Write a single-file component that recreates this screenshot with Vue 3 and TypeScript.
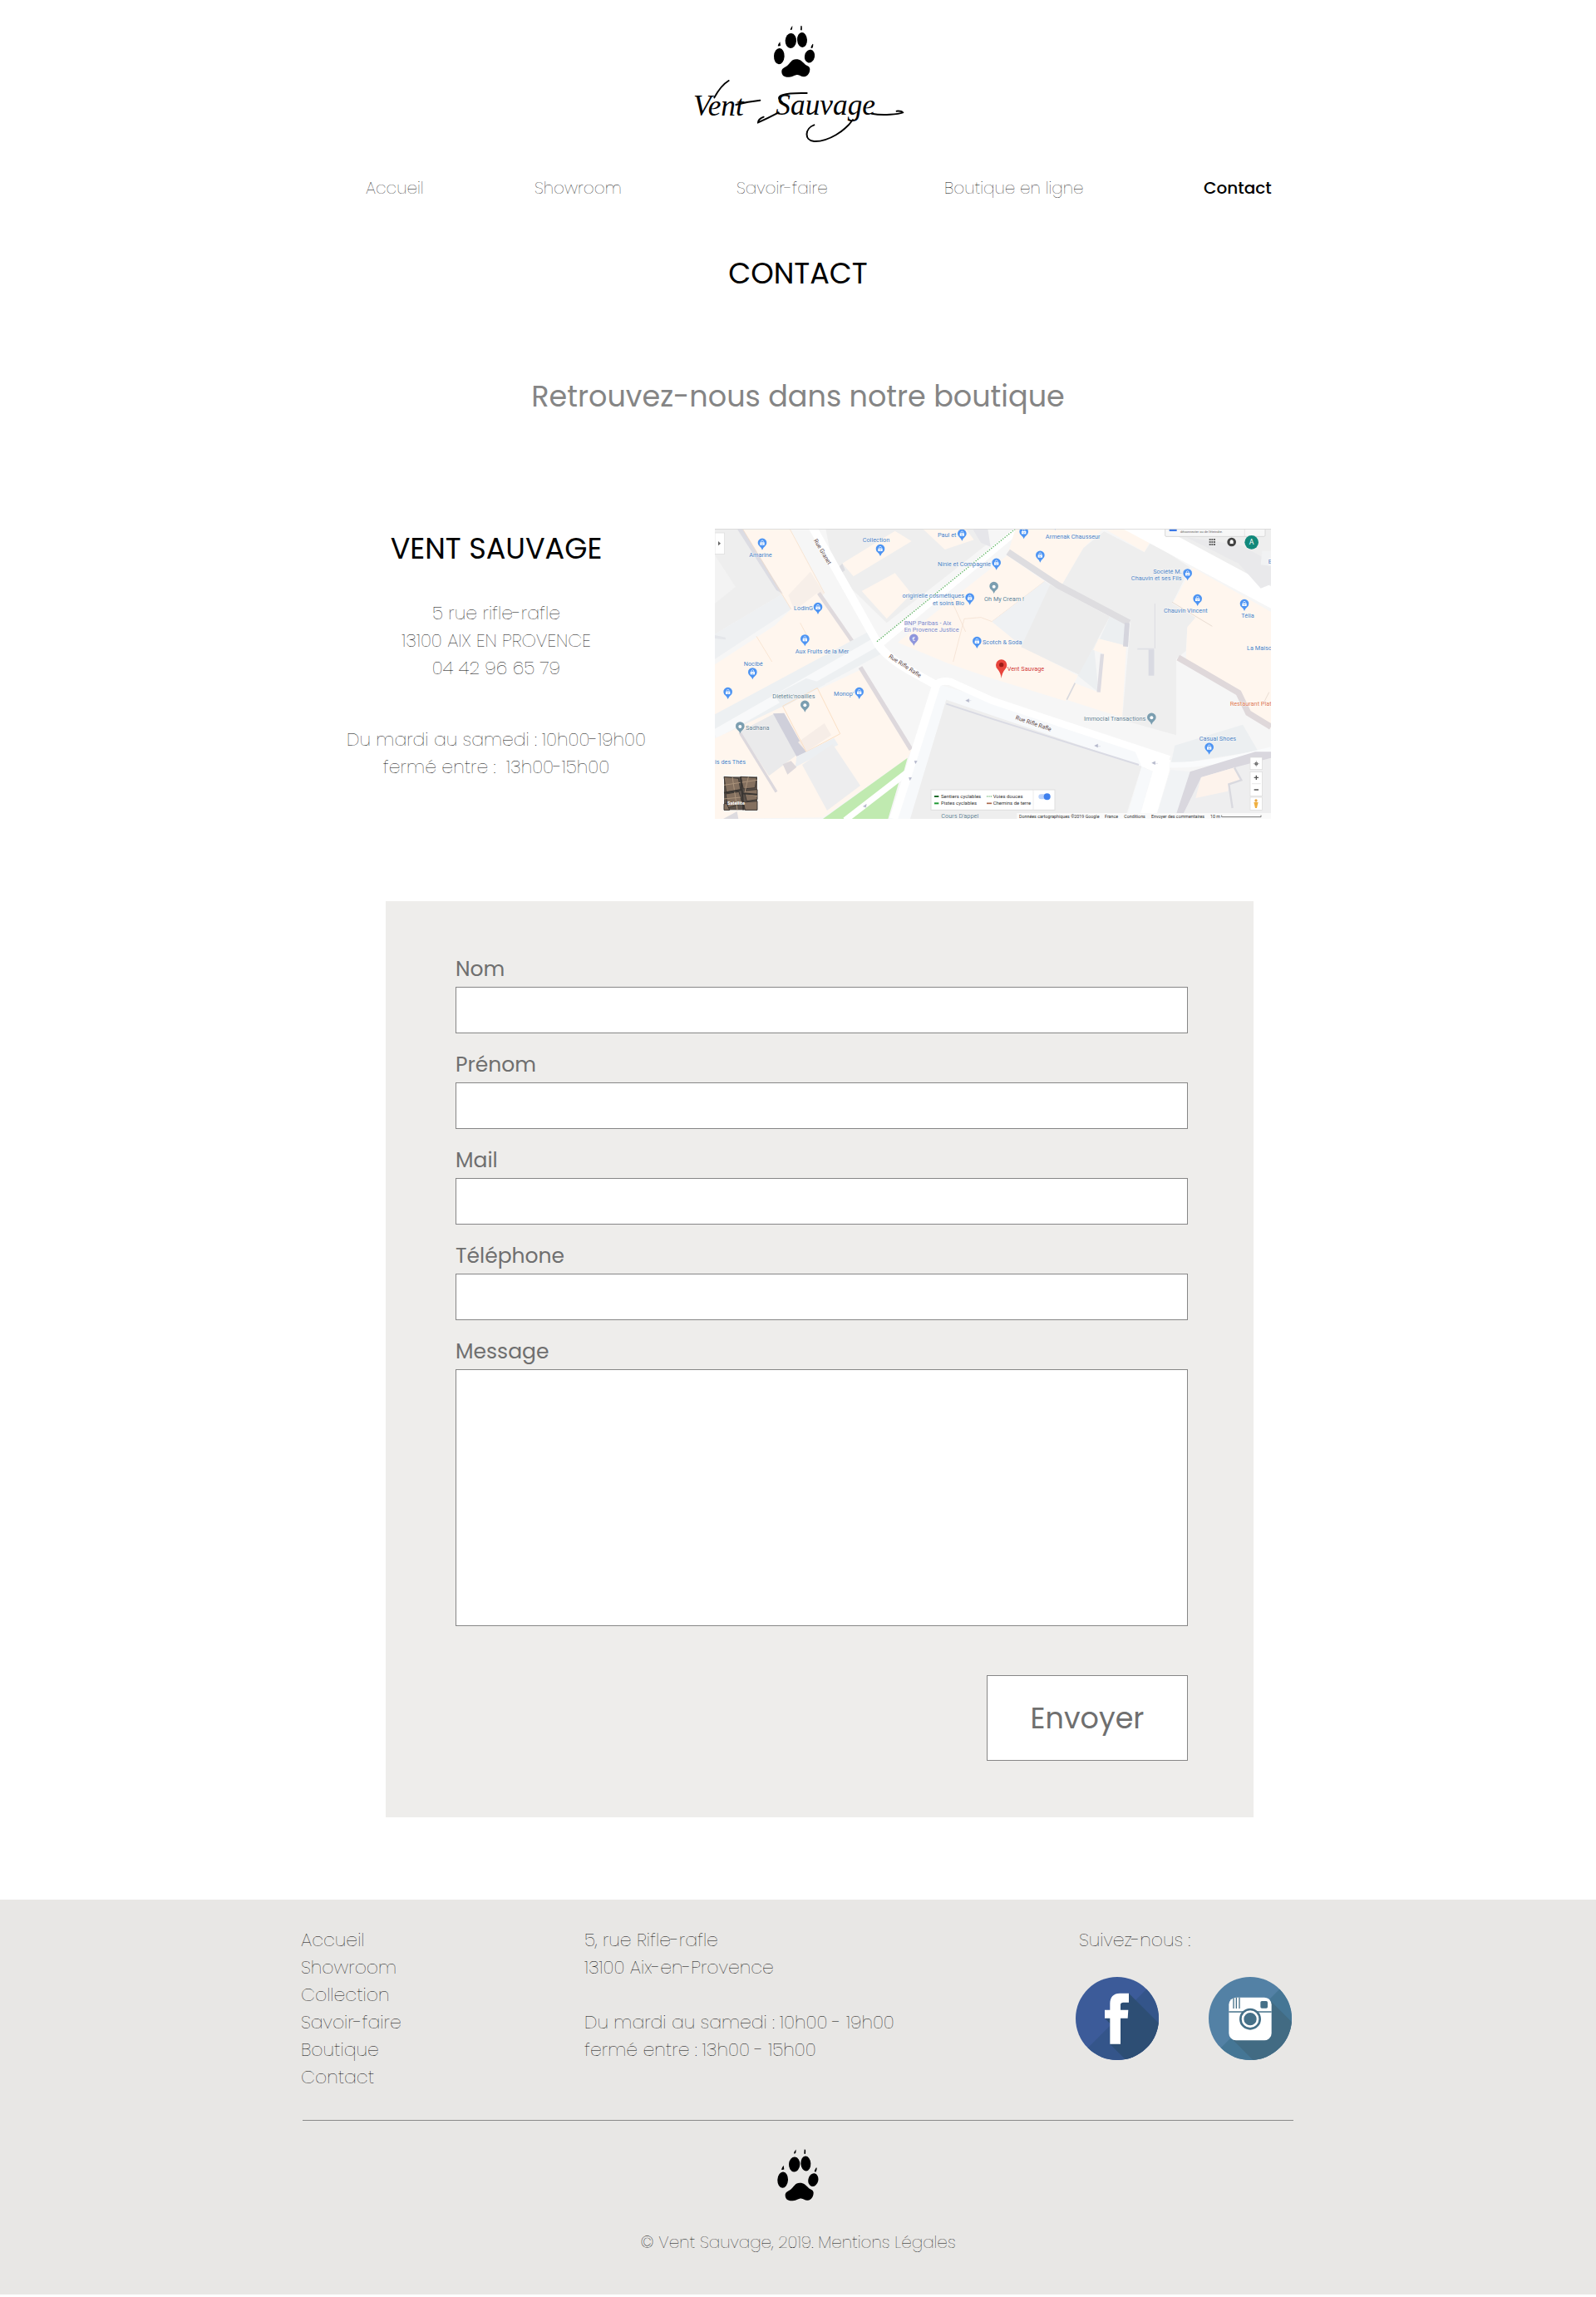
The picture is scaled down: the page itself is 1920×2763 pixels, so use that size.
<script setup lang="ts">
import { ref } from 'vue'

interface NavLink { label: string; current?: boolean }
interface Field { id: string; label: string; type: string }
interface Pin { x: number; y: number; color: string }
interface MapLabel { x: number; y: number; text: string; kind: string; end?: boolean }

const navLinks: NavLink[] = [
  { label: 'Accueil' },
  { label: 'Showroom' },
  { label: 'Savoir-faire' },
  { label: 'Boutique en ligne' },
  { label: 'Contact', current: true },
]

const footerLinks: string[] = ['Accueil', 'Showroom', 'Collection', 'Savoir-faire', 'Boutique', 'Contact']

const fields: Field[] = [
  { id: 'nom', label: 'Nom', type: 'text' },
  { id: 'prenom', label: 'Prénom', type: 'text' },
  { id: 'mail', label: 'Mail', type: 'email' },
  { id: 'telephone', label: 'Téléphone', type: 'tel' },
]

const form = ref<Record<string, string>>({ nom: '', prenom: '', mail: '', telephone: '', message: '' })

const SHOP = '#4d94f3'
const PLACE = '#7b9eb0'

const shopPins: Pin[] = [
  [171, 52], [597, 74], [892, 19], [1016, 124], [920, 250], [372, 284], [325, 399], [136, 519],
  [946, 407], [1115, 12], [1174, 97], [1228, -20], [1706, 162], [1742, 254], [1911, 272],
  [47, 590], [521, 590], [1784, 790],
].map(([x, y]) => ({ x, y, color: SHOP }))

const placePins: Pin[] = [
  { x: 1007, y: 209, color: PLACE },
  { x: 325, y: 637, color: PLACE },
  { x: 91, y: 714, color: PLACE },
  { x: 1576, y: 682, color: PLACE },
  { x: 718, y: 397, color: '#8f96dc' },
]

const mapLabels: MapLabel[] = [
  { x: 124, y: 102, text: 'Amarine', kind: 'shop' },
  { x: 533, y: 49, text: 'Collection', kind: 'shop' },
  { x: 804, y: 31, text: 'Paul et', kind: 'shop' },
  { x: 804, y: 136, text: 'Ninie et Compagnie', kind: 'shop' },
  { x: 900, y: 250, text: "origin'elle cosmétiques", kind: 'shop', end: true },
  { x: 900, y: 275, text: 'et soins Bio', kind: 'shop', end: true },
  { x: 285, y: 295, text: 'LodinG', kind: 'shop' },
  { x: 290, y: 449, text: 'Aux Fruits de la Mer', kind: 'shop' },
  { x: 104, y: 496, text: 'Nocibé', kind: 'shop' },
  { x: 683, y: 348, text: 'BNP Paribas - Aix', kind: 'bank' },
  { x: 683, y: 373, text: 'En Provence Justice', kind: 'bank' },
  { x: 966, y: 418, text: 'Scotch & Soda', kind: 'shop' },
  { x: 972, y: 260, text: 'Oh My Cream !', kind: 'place' },
  { x: 1055, y: 513, text: 'Vent Sauvage', kind: 'target' },
  { x: 1193, y: 35, text: 'Armenak Chausseur', kind: 'shop' },
  { x: 1685, y: 162, text: 'Société M.', kind: 'shop', end: true },
  { x: 1685, y: 187, text: 'Chauvin et ses Fils', kind: 'shop', end: true },
  { x: 1620, y: 303, text: 'Chauvin Vincent', kind: 'shop' },
  { x: 1900, y: 322, text: 'Télia', kind: 'shop' },
  { x: 1920, y: 437, text: 'La Maiso', kind: 'shop' },
  { x: 1997, y: 127, text: 'E', kind: 'shop' },
  { x: 208, y: 611, text: "Dietetic'noailles", kind: 'place' },
  { x: 429, y: 603, text: "Monop'", kind: 'shop' },
  { x: 111, y: 726, text: 'Sadhana', kind: 'place' },
  { x: 0, y: 848, text: 'is des Thés', kind: 'shop' },
  { x: 817, y: 1043, text: "Cours D'appel", kind: 'place' },
  { x: 1332, y: 693, text: 'Immocial Transactions', kind: 'place' },
  { x: 1859, y: 638, text: 'Restaurant Plat', kind: 'food' },
  { x: 1748, y: 765, text: 'Casual Shoes', kind: 'shop' },
]

const roofs: string[] = [
  '0,0 52,6 60,48 8,56', '60,0 118,4 112,40 70,44', '6,62 54,54 66,96 14,112',
  '72,50 120,46 120,82 82,88', '70,92 120,88 120,120 76,120', '0,98 10,96 20,120 0,120',
]
</script>

<template>
  <div class="page">
    <svg width="0" height="0" class="defs" aria-hidden="true">
      <symbol id="paw" viewBox="0 0 150 188">
        <ellipse cx="20" cy="111" rx="19" ry="29" transform="rotate(3 20 111)" />
        <ellipse cx="62" cy="55" rx="20" ry="27" transform="rotate(4 62 55)" />
        <ellipse cx="103" cy="52" rx="18" ry="27" transform="rotate(-3 103 52)" />
        <ellipse cx="130" cy="111" rx="18" ry="24" transform="rotate(12 130 111)" />
        <path d="M23 59L25 73Q20 75 15 74Q17 66 23 59ZM68 1L67 13Q64 17 60 15Q62 7 68 1ZM98 1L102 2Q103 10 102 17Q99 18 97 16ZM141 66L143 68Q143 77 140 81Q137 83 134 80Q136 72 141 66Z" />
        <path d="M81 122C64 122 61 136 50 144C40 152 28 153 29 168C30 183 43 187 56 186C70 186 76 178 86 178C96 179 100 186 110 185C124 183 131 170 131 157C130 146 119 146 113 140C103 130 97 122 81 122Z" />
      </symbol>
    </svg>

    <header class="header">
      <a href="#" class="logo" aria-label="Vent Sauvage">
        <svg viewBox="0 0 840 480" class="logo-art">
          <use href="#paw" x="332" y="32" width="150" height="188" />
          <text x="42" y="358" class="signature">Vent</text>
          <text x="340" y="354" class="signature">Sauvage</text>
          <!-- pen flourishes around the name -->
          <path class="pen" d="M118 292Q142 248 170 231" />
          <path class="pen" d="M196 318Q240 306 283 302" />
          <path class="pen" d="M350 346Q312 366 276 382Q276 370 296 362" />
          <path class="pen" d="M362 308C330 284 372 274 452 276" />
          <path class="pen" d="M618 372C590 412 530 452 478 450C440 446 446 402 478 391" />
          <path class="pen" d="M686 350C726 358 784 352 798 346Q794 340 776 341" />
        </svg>
      </a>
      <nav class="nav" aria-label="Navigation principale">
        <a v-for="l in navLinks" :key="l.label" href="#" :class="{ current: l.current }">{{ l.label }}</a>
      </nav>
    </header>

    <main class="wrap">
      <h1>CONTACT</h1>
      <p class="lead">Retrouvez-nous dans notre boutique</p>

      <section class="shop">
        <div class="address">
          <h2>VENT SAUVAGE</h2>
          <p>5 rue rifle-rafle<br>13100 AIX EN PROVENCE<br>04 42 96 65 79</p>
          <p class="hours">Du mardi au samedi : 10h00-19h00<br>fermé entre :&nbsp; 13h00-15h00</p>
        </div>

        <svg class="map" viewBox="0 0 2007 1047" role="img" aria-label="Plan de la boutique">
          <rect width="2007" height="1047" fill="#f6f6f6" />
          <!-- north-west blocks -->
          <polygon points="0,0 100,0 245,235 0,380" fill="#eeeeee" />
          <polygon points="0,95 75,210 0,270" fill="#f3f3f3" />
          <polygon points="245,235 275,290 0,470 0,380" fill="#eef0f2" />
          <polygon points="100,0 270,0 395,235 215,350 275,290" fill="#fff6ee" />
          <polygon points="345,155 395,235 290,300 265,240" fill="#f7efe9" />
          <path d="M80 0L100 0L245 235L222 222Z" fill="#dcdce3" />
          <polygon points="370,232 495,415 0,685 0,490 215,350" fill="#fff6ee" />
          <path d="M0 470L0 384L38 392L40 400L0 396" fill="#e4e6ea" />
          <path d="M375 232L500 412" stroke="#dfdadd" stroke-width="14" />
          <path d="M270 0L395 232M100 0L275 290M150 388L206 480M308 340L340 400" fill="none" stroke="#f6dcc4" stroke-width="2" />
          <!-- west street -->
          <path d="M580 410L0 722" stroke="#edf0f2" stroke-width="92" />
          <path d="M580 410L0 742" stroke="#f8f9fa" stroke-width="34" />
          <!-- central blocks -->
          <polygon points="400,0 930,0 990,50 620,340 430,155" fill="#eeeeee" />
          <polygon points="460,125 650,8 710,45 500,172" fill="#fff6ee" />
          <polygon points="530,225 650,160 710,235 620,325" fill="#fff6ee" />
          <polygon points="750,0 905,0 935,40 830,75" fill="#fff6ee" />
          <path d="M430 155L460 125L470 150L455 160Z" fill="#dddde1" />
          <path d="M930 0L985 0L995 65L960 50Z" fill="#e6e6ea" />
          <path d="M585 425L1110 -10" stroke="#ffffff" stroke-width="26" />
          <polygon points="660,410 1055,97 1190,190 1000,335 1110,425 1310,530 1265,622 990,537 840,485" fill="#fff6ee" />
          <path d="M1190 190L1000 335L960 320L900 325L860 480M850 250L905 372" fill="none" stroke="#f1dccb" stroke-width="2" />
          <polygon points="1000,335 1190,190 1225,212 1110,425" fill="#eff1f3" />
          <polygon points="1210,202 1425,317 1315,527 1105,427" fill="#ececec" />
          <polygon points="1425,317 1485,345 1480,422 1385,397 1310,530 1385,590 1370,440" fill="#eceff1" />
          <polygon points="1365,437 1385,397 1485,422 1480,507 1470,682 1270,617 1300,557 1385,590 1400,450" fill="#fff6ee" />
          <path d="M1300 557L1270 617" stroke="#d8d8dd" stroke-width="5" />
          <path d="M1398 452L1385 590" stroke="#dddbe1" stroke-width="13" />
          <polygon points="1085,0 1400,0 1330,70 1250,207 1060,80" fill="#fff6ee" />
          <polygon points="1405,10 1550,85 1575,47 1715,140 1650,270 1735,320 1705,360 1700,440 1665,470 1665,745 1470,690 1500,340 1250,207 1330,70" fill="#eeeeee" />
          <polygon points="1415,5 1550,84 1570,47 1490,0" fill="#fff6ee" />
          <path d="M1058 84L1240 205L1495 340" fill="none" stroke="#dedde0" stroke-width="24" />
          <path d="M1488 340L1482 425" stroke="#d5d5dd" stroke-width="18" />
          <path d="M1588 270V432" stroke="#e0e0e4" stroke-width="4" />
          <path d="M1525 434H1582V525" fill="none" stroke="#dfe0e5" stroke-width="5" />
          <path d="M1575 436V530" stroke="#d9dae2" stroke-width="20" />
          <!-- north-east -->
          <path d="M1560 -10L2007 0V220Z" fill="#eeeeee" />
          <path d="M1490 -30L2030 260" stroke="#ffffff" stroke-width="70" />
          <path d="M1700 30L1890 125L1970 215L2007 200V120L1900 60Z" fill="#e9e9eb" />
          <path d="M1975 80H2007V135L1970 130Z" fill="#f1f2f3" />
          <polygon points="1725,140 2007,300 2007,720 1925,672 1890,590 1700,470 1705,355 1735,320 1655,265" fill="#fff6ee" />
          <path d="M1650 265L1795 352M2000 590L1975 640" stroke="#e9dcd2" stroke-width="3" />
          <path d="M1672 465L1890 592L1925 665L2007 715" fill="none" stroke="#dfd8da" stroke-width="22" />
          <!-- south-west -->
          <polygon points="530,507 710,797 695,827 390,1042 0,1047 0,757" fill="#fff6ee" />
          <polygon points="330,540 215,600 245,645 400,560" fill="#edf0f2" />
          <polygon points="90,732 215,667 295,817 195,892" fill="#eaeaeb" />
          <path d="M210 667L250 665L330 807L295 822Z" fill="#cfcfda" />
          <path d="M300 770L395 702L420 745L330 805Z" fill="#f6ede7" />
          <path d="M245 640L370 575L452 740L330 805Z" fill="none" stroke="#fbe0c5" stroke-width="3" />
          <path d="M295 822L430 755L445 780L290 860Z" fill="#eceff2" />
          <polygon points="315,852 425,777 525,927 405,1017" fill="#ededee" />
          <path d="M245 850L275 838L295 860L262 887Z" fill="#ded9dc" />
          <path d="M90 735L222 950" stroke="#dcd8dd" stroke-width="10" />
          <path d="M525 500L708 797" stroke="#ddd8dc" stroke-width="16" />
          <path d="M80 1020L85 1047H30Z" fill="#dddbdf" />
          <polygon points="695,827 680,882 470,1047 390,1047" fill="#c0eab0" />
          <polygon points="665,912 625,1047 490,1047" fill="#c0eab0" />
          <path d="M690 882L470 1052" stroke="#ffffff" stroke-width="22" />
          <!-- Rue Granet and Rue Rifle Rafle -->
          <path d="M350 -10L580 400Q600 450 700 510L800 565" fill="none" stroke="#ffffff" stroke-width="30" />
          <polygon points="800,560 990,615 1640,832 1540,865 835,617 705,1047 630,1047 690,860" fill="#f7f9fb" />
          <path d="M800 560L705 860L645 1047" fill="none" stroke="#ffffff" stroke-width="30" />
          <path d="M800 565Q810 545 850 552L1000 620L1640 832" fill="none" stroke="#ffffff" stroke-width="26" />
          <polygon points="835,617 1540,857 1480,1047 705,1047" fill="#eeeeee" />
          <path d="M835 632L1000 686L1530 852" fill="none" stroke="#d9dae3" stroke-width="6" />
          <polygon points="1510,790 1645,835 1640,875 1590,1047 1530,1047 1580,875 1540,857" fill="#ffffff" />
          <polygon points="1540,860 1580,875 1530,1047 1485,1047" fill="#f7f9fb" />
          <!-- south-east -->
          <polygon points="1645,870 1715,877 1665,1047 1590,1047" fill="#f1f3f5" />
          <polygon points="1715,877 2007,805 2007,1047 1665,1047" fill="#eeeeef" />
          <polygon points="1660,782 1905,707 1960,802 1645,852" fill="#eceff1" />
          <path d="M1640 852Q1780 856 2007 797" fill="none" stroke="#fafbfc" stroke-width="20" />
          <polygon points="1715,877 1950,805 2007,805 2007,827 1875,862 1755,897 1690,1030 1665,1030" fill="#d9d7de" />
          <polygon points="1755,897 1875,862 1900,907 1855,922 1852,947 1735,972" fill="#fdf3ec" />
          <path d="M1875 862L1900 907L1855 922L1868 1008" fill="none" stroke="#d9d9df" stroke-width="7" />
          <path d="M585 407L1085 0" stroke="#5bb35f" stroke-width="4" stroke-dasharray="4 5" />
          <path d="M905 620l12 -6v12zM917 620h8M1370 783l12 -6v12zM1382 785h10M1577 845l12 -6v12zM1589 847h10M720 838l10 0l-6 10zM700 898l10 0l-6 10zM535 1002l12 -8l-2 12z" fill="#b4b7ca" stroke="#b4b7ca" stroke-width="1" />

          <text class="street" transform="translate(356 42) rotate(59)">Rue Granet</text>
          <text class="street" transform="translate(626 464) rotate(33)">Rue Rifle Rafle</text>
          <text class="street" transform="translate(1084 687) rotate(19)">Rue Rifle Rafle</text>

          <g v-for="p in [...shopPins, ...placePins]" :key="p.x + '-' + p.y" :transform="`translate(${p.x} ${p.y})`">
            <path d="M0 25Q-3 16 -10 11A16 16 0 1 1 10 11Q3 16 0 25Z" :fill="p.color" />
            <template v-if="p.color === SHOP">
              <path d="M-8 -3H8V7H-8Z" fill="#fff" />
              <path d="M-4 -3V-6A4 4 0 0 1 4 -6V-3" fill="none" stroke="#fff" stroke-width="2" />
              <path d="M-4 1Q0 6 4 1" fill="none" :stroke="p.color" stroke-width="2" />
            </template>
            <circle v-else-if="p.color === PLACE" r="6" fill="#fff" />
            <text v-else x="-6" y="8" class="euro">€</text>
          </g>
          <path d="M1034 540Q1032 520 1020 506A20 20 0 1 1 1048 506Q1036 520 1034 540Z" fill="#e8453c" />
          <circle cx="1034" cy="491" r="8" fill="#9c1c17" />

          <text
            v-for="t in mapLabels" :key="t.text" :x="t.x" :y="t.y"
            :class="['label', t.kind]" :text-anchor="t.end ? 'end' : 'start'"
          >{{ t.text }}</text>

          <!-- map controls -->
          <rect x="0" y="15" width="35" height="76" fill="#fff" stroke="#dcdcdc" stroke-width="2" />
          <path d="M12 45l9 8l-9 8z" fill="#666" />
          <rect x="1625" y="-10" width="361" height="38" rx="4" fill="#f7f7f7" stroke="#d8d8d8" stroke-width="3" />
          <rect x="1640" y="0" width="27" height="9" fill="#3b78e7" />
          <text x="1680" y="16" class="notice">déconnecter ou de l'éteindre.</text>
          <path d="M1912 0V28" stroke="#ddd" stroke-width="2" />
          <path d="M1784 39h22M1784 48h22M1784 57h22" stroke="#666" stroke-width="6" stroke-dasharray="6 2" />
          <circle cx="1865" cy="48" r="16" fill="#424242" />
          <path d="M1859 54V46a6 6 0 0 1 12 0v8z" fill="#fff" />
          <circle cx="1937" cy="49" r="25" fill="#12897b" />
          <text x="1937" y="58" text-anchor="middle" class="avatar">A</text>

          <g transform="translate(33 895)">
            <rect x="-3" y="-3" width="126" height="126" fill="#fff" />
            <rect width="120" height="120" fill="#5c524b" />
            <polygon v-for="r in roofs" :key="r" :points="r" fill="#84705f" stroke="#3c3733" stroke-width="3" />
            <path d="M0 30L120 12M30 0L48 120M88 0L74 60L120 70M0 80L60 74" stroke="#ab937b" stroke-width="3" fill="none" />
            <path d="M60 0L66 60L120 64M66 60L70 120M0 58L66 46" stroke="#393532" stroke-width="6" fill="none" />
            <text x="12" y="102" class="satellite">Satellite</text>
          </g>

          <rect x="780" y="942" width="447" height="73" fill="#fff" stroke="#dedede" stroke-width="3" />
          <path d="M792 966h16" stroke="#1c6b2a" stroke-width="6" />
          <path d="M792 991h16" stroke="#1f9a34" stroke-width="6" />
          <path d="M981 966h18" stroke="#4aa350" stroke-width="3" stroke-dasharray="4 3" />
          <path d="M981 991h18" stroke="#a9674a" stroke-width="5" />
          <text x="816" y="972" class="legend">Sentiers cyclables</text>
          <text x="816" y="997" class="legend">Pistes cyclables</text>
          <text x="1004" y="972" class="legend">Voies douces</text>
          <text x="1004" y="997" class="legend">Chemins de terre</text>
          <path d="M1149 943V1014" stroke="#e4e4e4" stroke-width="2" />
          <rect x="1168" y="958" width="40" height="18" rx="9" fill="#bcd2fa" />
          <circle cx="1199" cy="967" r="12" fill="#3f80ee" />

          <g fill="#fff" stroke="#dadada" stroke-width="2">
            <rect x="1932" y="825" width="43" height="44" />
            <rect x="1932" y="877" width="43" height="88" />
            <rect x="1932" y="969" width="43" height="46" />
          </g>
          <circle cx="1954" cy="848" r="6" fill="#555" />
          <path d="M1954 837v22M1943 848h22" stroke="#999" stroke-width="2" />
          <path d="M1954 890v16M1946 898h16M1946 942h16" stroke="#555" stroke-width="4" />
          <path d="M1938 920h32" stroke="#ddd" stroke-width="2" />
          <circle cx="1953" cy="981" r="5" fill="#e8a33d" />
          <path d="M1945 987h16l-3 12l-2 9h-6l-2 -9z" fill="#f0b040" />

          <rect x="1090" y="1026" width="917" height="21" fill="#fafafa" />
          <text x="1098" y="1043" class="legal">Données cartographiques ©2019 Google</text>
          <text x="1407" y="1043" class="legal">France</text>
          <text x="1477" y="1043" class="legal">Conditions</text>
          <text x="1575" y="1043" class="legal">Envoyer des commentaires</text>
          <text x="1788" y="1043" class="legal">10 m</text>
          <path d="M1829 1034v6h142v-6" fill="none" stroke="#777" stroke-width="3" />
          <path d="M0 1H2007" stroke="#d8d8d8" stroke-width="3" />
        </svg>
      </section>

      <form class="form" @submit.prevent>
        <div v-for="f in fields" :key="f.id" class="field">
          <label :for="f.id">{{ f.label }}</label>
          <input :id="f.id" v-model="form[f.id]" :type="f.type">
        </div>
        <div class="field">
          <label for="message">Message</label>
          <textarea id="message" v-model="form.message"></textarea>
        </div>
        <button type="submit">Envoyer</button>
      </form>
    </main>

    <footer class="footer">
      <div class="wrap">
        <div class="columns">
          <ul>
            <li v-for="l in footerLinks" :key="l"><a href="#">{{ l }}</a></li>
          </ul>
          <div>
            <p>5, rue Rifle-rafle<br>13100 Aix-en-Provence</p>
            <p class="times">Du mardi au samedi : 10h00 - 19h00<br>fermé entre : 13h00 - 15h00</p>
          </div>
          <div>
            <p class="follow">Suivez-nous :</p>
            <div class="social">
              <a href="#" aria-label="Facebook">
                <svg viewBox="0 0 300 300">
                  <clipPath id="disc"><circle cx="150" cy="150" r="150" /></clipPath>
                  <g clip-path="url(#disc)">
                    <rect width="300" height="300" fill="#3c5b99" />
                    <path d="M300 0L0 300H300Z" fill="#34558a" />
                    <path d="M192 59L300 167V300H182L124 242V168L105 149Z" fill="#2d4e74" />
                    <path d="M192 59H160C136 59 124 73 124 96V119H105V149H124V242H162V149H188L190 119H162V101C162 94 166 92 172 92H192Z" fill="#fff" />
                  </g>
                </svg>
              </a>
              <a href="#" aria-label="Instagram">
                <svg viewBox="0 0 300 300">
                  <g clip-path="url(#disc)">
                    <rect width="300" height="300" fill="#5381a5" />
                    <path d="M300 0L0 300H300Z" fill="#457695" />
                    <path d="M219 82L300 163V300H160L82 221Z" fill="#426b83" />
                    <rect x="73" y="74" width="154" height="155" rx="26" fill="#fff" />
                    <path d="M73 126H227" stroke="#457088" stroke-width="4" />
                    <path d="M90 76V114M100 74V114M111 74V114" stroke="#457088" stroke-width="4" />
                    <rect x="187" y="87" width="26" height="26" rx="5" fill="#457088" />
                    <circle cx="150" cy="152" r="39" fill="#457088" />
                    <circle cx="150" cy="152" r="27" fill="#457088" stroke="#fff" stroke-width="8" />
                  </g>
                </svg>
              </a>
            </div>
          </div>
        </div>
        <hr>
        <svg class="paw"><use href="#paw" /></svg>
        <p class="copyright">© Vent Sauvage, 2019. <a href="#">Mentions Légales</a></p>
      </div>
    </footer>
  </div>
</template>

<style>
body { margin: 0; background: #fff; }
</style>

<style scoped>
.page {
  font-family: Poppins, Inter, "Liberation Sans", sans-serif;
  font-weight: 200;
  font-size: 22px;
  line-height: 33px;
  color: #000;
}
.page * { box-sizing: border-box; }
.defs { position: absolute; }
h1, h2, p, ul { margin: 0; padding: 0; font-weight: inherit; }
a { color: inherit; text-decoration: none; }
.wrap { max-width: 1196px; margin: 0 auto; }

.header { max-width: 1196px; margin: 0 auto; padding-top: 20px; }
.logo { display: block; width: 280px; margin: 0 auto; }
.logo-art { display: block; width: 100%; }
.signature { font-family: "Liberation Serif", serif; font-style: italic; font-weight: 400; font-size: 106px; }
.pen { fill: none; stroke: #000; stroke-width: 6; stroke-linecap: round; }
.nav {
  display: grid;
  grid-template-columns: 203fr 243fr 250fr 312fr 83fr;
  margin-top: 31px;
  padding: 0 27px 0 78px;
  font-size: 20px;
  line-height: 30px;
  white-space: nowrap;
}
.nav .current { font-weight: 500; }

h1 { margin-top: 63px; font-size: 35px; line-height: 50px; font-weight: 400; text-align: center; }
.lead { margin-top: 96px; font-size: 35px; line-height: 54px; font-weight: 400; text-align: center; color: #858585; }

.shop { display: flex; gap: 82px; margin-top: 132px; padding: 0 29px 0 54px; }
.address { flex: none; width: 362px; text-align: center; white-space: nowrap; }
.address h2 { margin-bottom: 37px; font-size: 35px; line-height: 48px; font-weight: 400; }
.hours { margin-top: 53px; }
.map { flex: 1; min-width: 0; display: block; overflow: hidden; font-family: Roboto, sans-serif; font-weight: 400; }
.label { font-size: 22px; paint-order: stroke; stroke: #fff; stroke-width: 2px; }
.shop .label.shop { fill: #4a7ebf; }
.label.bank { fill: #7d86c4; }
.label.place { fill: #62808f; }
.label.target { fill: #d3352d; }
.label.food { fill: #dd7850; }
.street { font-size: 21px; fill: #5b4646; }
.euro { font-size: 20px; fill: #fff; }
.notice { font-size: 12px; fill: #666; }
.avatar { font-size: 26px; fill: #fff; }
.satellite { font-size: 17px; fill: #fff; font-weight: 700; }
.legend { font-size: 18px; fill: #333; }
.legal { font-size: 16px; fill: #333; }

.form { margin: 99px 50px 0 102px; padding: 64px 79px 68px 84px; background: #eeedeb; color: #6f6f6f; font-weight: 400; }
.field { margin-bottom: 20px; }
.field label { display: block; margin-bottom: 3px; font-size: 25px; line-height: 36px; }
.field input, .field textarea {
  display: block;
  width: 100%;
  height: 56px;
  padding: 8px 16px;
  border: 1px solid #868686;
  border-radius: 0;
  background: #fff;
  font: inherit;
  resize: none;
}
.field textarea { height: 309px; }
.form button {
  display: block;
  width: 242px;
  height: 103px;
  margin: 59px 0 0 auto;
  padding: 0;
  border: 1px solid #868686;
  background: #fff;
  font: inherit;
  font-size: 35px;
  color: #6f6f6f;
}

.footer { margin-top: 99px; padding: 32px 0 48px; background: #e8e7e5; }
.columns { display: grid; grid-template-columns: 341fr 591fr 264fr; }
.columns ul { list-style: none; }
.times { margin-top: 33px; }
.follow { padding-left: 4px; }
.social { display: flex; gap: 60px; margin-top: 28px; }
.social svg { display: block; width: 100px; height: 100px; }
hr { margin: 35px 2px 34px; border: 0; border-top: 1px solid #8a8a8a; }
.paw { display: block; width: 50px; height: 63px; margin: 0 auto 34px; }
.copyright { font-size: 20px; line-height: 30px; text-align: center; }
</style>
